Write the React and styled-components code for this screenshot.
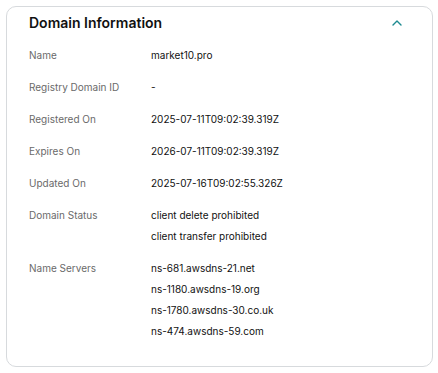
import React from "react";
import styled, { createGlobalStyle } from "styled-components";

const Global = createGlobalStyle`
  html, body { margin: 0; padding: 0; background: #ffffff; }
  body { font-family: Inter, "Noto Sans", sans-serif; }
`;

const Card = styled.section`
  margin: 6px 0 0 6px;
  width: 427px;
  height: 361px;
  box-sizing: border-box;
  border: 1px solid #d7dadd;
  border-radius: 10px;
  padding: 5px 22px 0 22px;
  background: #fff;
`;

const Header = styled.div`
  display: flex;
  align-items: center;
  justify-content: space-between;
  height: 22px;
`;

const Title = styled.h2`
  margin: 0;
  font-size: 14px;
  font-weight: 600;
  line-height: 22px;
  color: #111111;
  letter-spacing: 0;
`;

const Toggle = styled.button`
  border: 0;
  background: none;
  padding: 0;
  margin-right: 7px;
  width: 12px;
  height: 12px;
  display: flex;
  align-items: center;
  justify-content: center;
  color: #1d8a90;
`;

const Rows = styled.div`
  display: flex;
  flex-direction: column;
  gap: 11px;
  padding-top: 11px;
`;

const Row = styled.div`
  display: grid;
  grid-template-columns: 122px 1fr;
`;

const Label = styled.div`
  font-size: 10px;
  line-height: 21px;
  color: #6a6a6a;
`;

const Values = styled.div`
  display: flex;
  flex-direction: column;
`;

const Value = styled.div`
  font-size: 10px;
  line-height: 21px;
  color: #111111;
`;

const rows = [
  ["Name", ["market10.pro"]],
  ["Registry Domain ID", ["-"]],
  ["Registered On", ["2025-07-11T09:02:39.319Z"]],
  ["Expires On", ["2026-07-11T09:02:39.319Z"]],
  ["Updated On", ["2025-07-16T09:02:55.326Z"]],
  ["Domain Status", ["client delete prohibited", "client transfer prohibited"]],
  [
    "Name Servers",
    [
      "ns-681.awsdns-21.net",
      "ns-1180.awsdns-19.org",
      "ns-1780.awsdns-30.co.uk",
      "ns-474.awsdns-59.com",
    ],
  ],
];

export default function App() {
  return (
    <>
      <Global />
      <Card>
        <Header>
          <Title>Domain Information</Title>
          <Toggle aria-label="Collapse">
            <svg width="10" height="6" viewBox="0 0 10 6">
              <polyline
                points="1,5 5,1 9,5"
                fill="none"
                stroke="currentColor"
                strokeWidth="1.4"
                strokeLinecap="round"
                strokeLinejoin="round"
              />
            </svg>
          </Toggle>
        </Header>
        <Rows>
          {rows.map(([label, values]) => (
            <Row key={label}>
              <Label>{label}</Label>
              <Values>
                {values.map((v) => (
                  <Value key={v}>{v}</Value>
                ))}
              </Values>
            </Row>
          ))}
        </Rows>
      </Card>
    </>
  );
}
